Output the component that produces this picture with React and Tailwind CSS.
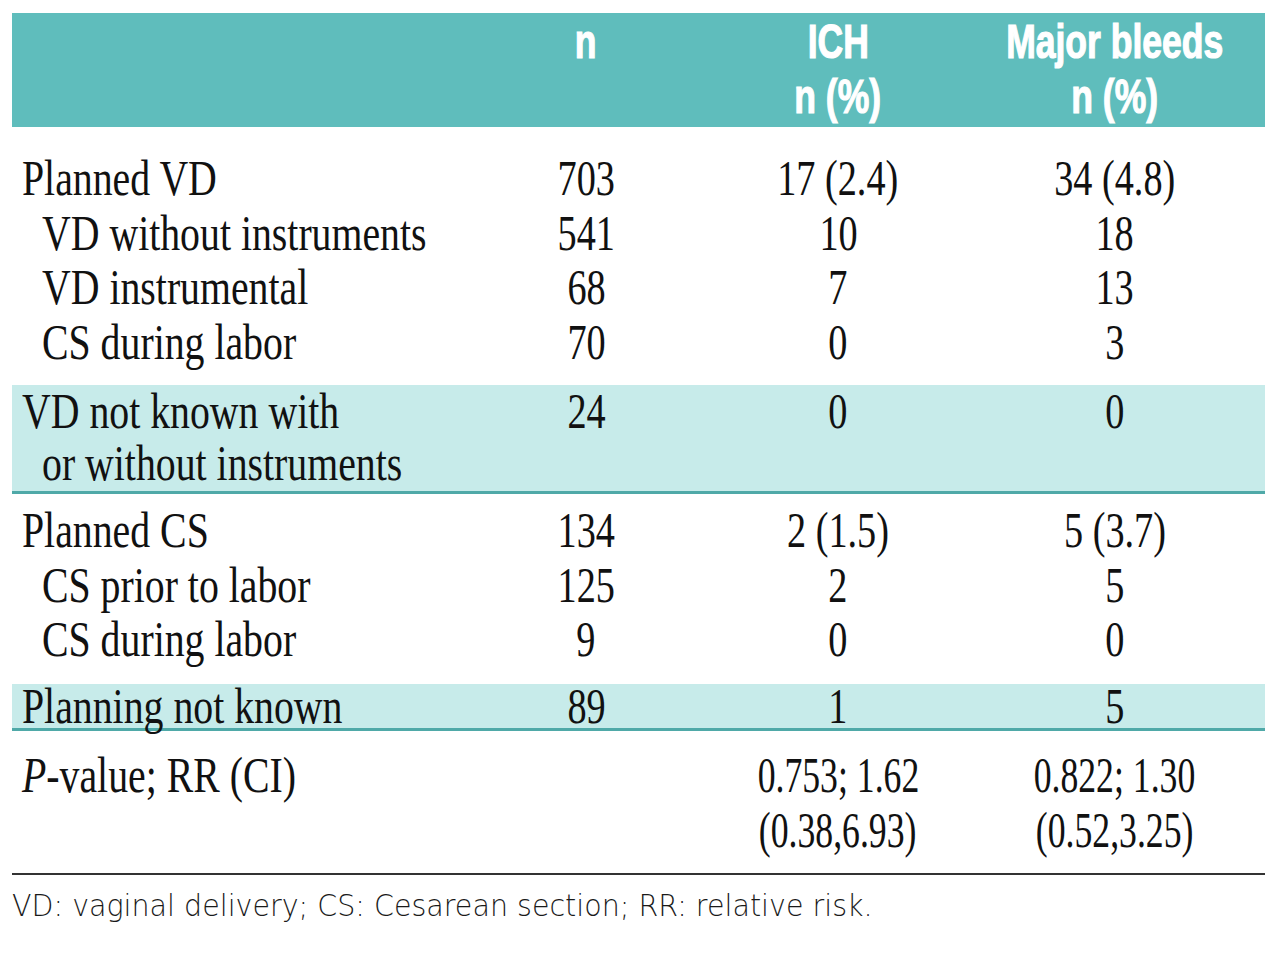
import React from 'react';

const cols = "grid grid-cols-[448px_252px_252px_301px]";

const Cell = ({children, left, indent}) => {
    if (left) {
        return (
            <div className={indent ? "pl-[30px]" : "pl-[10px]"}>
                <span className="inline-block origin-left scale-x-[0.78] whitespace-nowrap">{children}</span>
            </div>
        );
    }
    return (
        <div className="text-center">
            <span className="inline-block scale-x-[0.75] whitespace-nowrap">{children}</span>
        </div>
    );
};

const Row = ({label, n, ich, mb, indent, h = "leading-[54.5px]"}) => (
    <div className={`${cols} ${h}`}>
        <Cell left indent={indent}>{label}</Cell>
        <Cell>{n}</Cell>
        <Cell>{ich}</Cell>
        <Cell>{mb}</Cell>
    </div>
);

const HeadCell = ({lines}) => (
    <div className="text-center leading-[55px]">
        {lines.map((l, i) => (
            <div key={i}>
                <span className="inline-block scale-x-[0.74] whitespace-nowrap">{l}</span>
            </div>
        ))}
    </div>
);

export default function App() {
    return (
        <div className="w-[1280px] h-[957px] bg-white pt-[13px] text-[#111]">
            <div className="ml-[12px] w-[1253px]">
                {/* Header */}
                <div className={`${cols} h-[114px] pt-[1px] bg-[#5fbdbc] text-white font-bold text-[48px] [-webkit-text-stroke:1.2px_#fff] font-['Liberation_Sans',Arial,sans-serif]`}>
                    <div></div>
                    <HeadCell lines={["n"]} />
                    <HeadCell lines={["ICH", "n (%)"]} />
                    <HeadCell lines={["Major bleeds", "n (%)"]} />
                </div>

                <div className="font-['Liberation_Serif','Times_New_Roman',serif] text-[51px]">
                    {/* Planned VD */}
                    <div className="pt-[24px] pb-[16px]">
                        <Row label="Planned VD" n="703" ich="17 (2.4)" mb="34 (4.8)" />
                        <Row indent label="VD without instruments" n="541" ich="10" mb="18" />
                        <Row indent label="VD instrumental" n="68" ich="7" mb="13" />
                        <Row indent label="CS during labor" n="70" ich="0" mb="3" />
                    </div>

                    {/* VD unknown */}
                    <div className="bg-[#c7ebea] border-b-[3px] border-[#4fa9a8] pb-[2px]">
                        <div className={`${cols} leading-[52px]`}>
                            <div className="pl-[10px]">
                                <div><span className="inline-block origin-left scale-x-[0.78] whitespace-nowrap">VD not known with</span></div>
                                <div className="pl-[20px]"><span className="inline-block origin-left scale-x-[0.78] whitespace-nowrap">or without instruments</span></div>
                            </div>
                            <Cell>24</Cell>
                            <Cell>0</Cell>
                            <Cell>0</Cell>
                        </div>
                    </div>

                    {/* Planned CS */}
                    <div className="pt-[9px] pb-[17px]">
                        <Row label="Planned CS" n="134" ich="2 (1.5)" mb="5 (3.7)" />
                        <Row indent label="CS prior to labor" n="125" ich="2" mb="5" />
                        <Row indent label="CS during labor" n="9" ich="0" mb="0" />
                    </div>

                    {/* Planning not known */}
                    <div className="bg-[#c7ebea] border-b-[3px] border-[#4fa9a8]">
                        <Row label="Planning not known" n="89" ich="1" mb="5" h="leading-[44px]" />
                    </div>

                    {/* P-value */}
                    <div className={`${cols} leading-[55px] pt-[17px] pb-[15px] border-b-2 border-[#333]`}>
                        <Cell left><i>P</i>-value; RR (CI)</Cell>
                        <div></div>
                        <div className="text-center">
                            <div><span className="inline-block scale-x-[0.7] whitespace-nowrap">0.753; 1.62</span></div>
                            <div><span className="inline-block scale-x-[0.7] whitespace-nowrap">(0.38,6.93)</span></div>
                        </div>
                        <div className="text-center">
                            <div><span className="inline-block scale-x-[0.7] whitespace-nowrap">0.822; 1.30</span></div>
                            <div><span className="inline-block scale-x-[0.7] whitespace-nowrap">(0.52,3.25)</span></div>
                        </div>
                    </div>
                </div>

                {/* Footnote */}
                <div className="mt-[12px] leading-[36px] text-[31px] text-[#1a1a1a] font-['DejaVu_Sans',sans-serif] font-extralight">
                    <span className="inline-block origin-left scale-x-[0.92] whitespace-nowrap">VD: vaginal delivery; CS: Cesarean section; RR: relative risk.</span>
                </div>
            </div>
        </div>
    );
}
